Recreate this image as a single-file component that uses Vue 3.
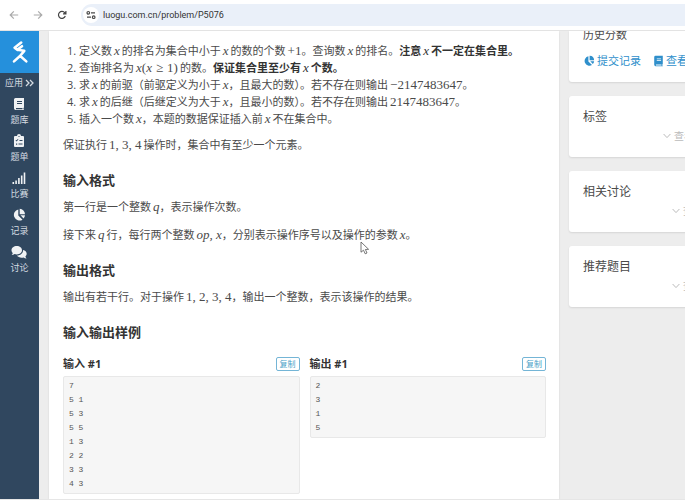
<script setup>
const nav = [
  { id: 'book', label: '题库' },
  { id: 'list', label: '题单' },
  { id: 'bars', label: '比赛' },
  { id: 'pie', label: '记录' },
  { id: 'chat', label: '讨论' },
]
const samples = [
  { title: '输入 #1', text: '7\n5 1\n5 3\n5 5\n1 3\n2 2\n3 3\n4 3' },
  { title: '输出 #1', text: '2\n3\n1\n5' },
]
const panels = [
  { title: '标签', wide: true },
  { title: '相关讨论', wide: false },
  { title: '推荐题目', wide: false },
]
</script>

<template>
  <div class="window">
    <header class="toolbar">
      <button class="tool muted" aria-label="后退">
        <svg width="10" height="10" viewBox="0 0 10 10"><path d="M9.2 5H1.2M4.8 1.4L1.2 5l3.6 3.6" /></svg>
      </button>
      <button class="tool muted" aria-label="前进">
        <svg width="10" height="10" viewBox="0 0 10 10"><path d="M.8 5h8M5.2 1.4L8.8 5 5.2 8.6" /></svg>
      </button>
      <button class="tool" aria-label="刷新">
        <svg width="10" height="10" viewBox="0 0 10 10"><path d="M8.3 6A3.5 3.5 0 1 1 7.8 2.8L8.8 3.7M8.9 1v2.9H6" /></svg>
      </button>
      <div class="address">
        <span class="site">
          <svg width="10" height="10" viewBox="0 0 10 10"><circle cx="2.3" cy="2.8" r="1.3" /><path d="M5 2.8h4M1 7.2h4" /><circle cx="7.7" cy="7.2" r="1.3" /></svg>
        </span>
        <input class="url" aria-label="地址" value="luogu.com.cn/problem/P5076" />
      </div>
    </header>

    <div class="page">
      <nav class="side">
        <a class="logo" href="#" aria-label="首页">
          <svg width="20" height="24" viewBox="0 0 20 24"><path d="M11.2 2.6L4.6 7.8l2.6 2L12 6.2M7.2 9.800L14.300 10.800 10 16 4 21.400M10 15.800l6.300 5.600" /></svg>
        </a>
        <a class="apps" href="#">应用
          <svg width="9" height="8" viewBox="0 0 9 8"><path d="M1 1l3 3-3 3M5 1l3 3-3 3" /></svg>
        </a>
        <a v-for="n in nav" :key="n.id" class="item" href="#">
          <svg v-if="n.id === 'book'" width="14" height="14" viewBox="0 0 14 14"><path fill-rule="evenodd" d="M3.5 1H12v9.5l-.5.5v1.5h.5V13H3.5A1.8 1.8 0 0 1 2 11.500v-9A1.5 1.5 0 0 1 3.5 1zM5 4v1h5V4zM5 6v1h5V6zM4 11v1.2h6.5V11z" /></svg>
          <svg v-else-if="n.id === 'list'" width="14" height="14" viewBox="0 0 14 14"><path fill-rule="evenodd" d="M5 2a2 2 0 0 1 4 0h2q1 0 1 1v9q0 1-1 1H3q-1 0-1-1V3q0-1 1-1zM6.5 2v1h1V2zM3.5 6.5l1 1 2-2-.6-.6-1.4 1.4-.4-.4zM7.5 6v1h3V6zM4 9.5v1.2h1.2V9.5zM6.5 9.600v1h4v-1z" /></svg>
          <svg v-else-if="n.id === 'bars'" width="14" height="14" viewBox="0 0 14 14"><path d="M.5 11h1.6v2H.5zM3.3 9.5h1.6V13H3.3zM6.1 7h1.6v6H6.1zM8.9 4.5h1.6V13H8.9zM11.7 1.5h1.6V13h-1.600z" /></svg>
          <svg v-else-if="n.id === 'pie'" width="14" height="14" viewBox="0 0 14 14"><path d="M6.3 1.5v6l4.2 4.2A5.6 5.6 0 1 1 6.3 1.5zM7.7.8a5.5 5.5 0 0 1 5.3 5.4H7.7zM8.5 7.3H13a5.5 5.5 0 0 1-1.5 3.3z" /></svg>
          <svg v-else width="16" height="14" viewBox="0 0 16 14"><path d="M5.8 1C8.8 1 11 2.9 11 5.2S8.8 9.4 5.8 9.4c-.8 0-1.5-.1-2.2-.4-.8.6-1.8 1-3 1 .7-.7 1.1-1.3 1.2-2C1 7.3.5 6.3.5 5.2.5 2.9 2.8 1 5.8 1zM12 5c2.2.4 3.7 1.9 3.7 3.7 0 1.1-.5 2-1.3 2.7.1.7.5 1.3 1.2 2-1.2 0-2.2-.4-3-1-.7.2-1.3.3-2 .3-2 0-3.7-.8-4.600-2.2C9.5 10.5 12.3 8 12 5z" /></svg>
          <span>{{ n.label }}</span>
        </a>
      </nav>

      <main class="main">
        <article class="card article">
          <ol class="ops">
            <li>定义数<i>x</i>的排名为集合中小于<i>x</i>的数的个数<b class="num end">+1</b>。查询数<i>x</i>的排名。<strong>注意<i>x</i>不一定在集合里。</strong></li>
            <li>查询排名为<i class="end">x</i><b class="num tight">(</b><i class="tight">x</i><b class="num rel">≥</b><b class="num start">1)</b>的数。<strong>保证集合里至少有<i>x</i>个数。</strong></li>
            <li>求<i>x</i>的前驱（前驱定义为小于<i class="end">x</i>，且最大的数）。若不存在则输出<b class="num end">−2147483647</b>。</li>
            <li>求<i>x</i>的后继（后继定义为大于<i class="end">x</i>，且最小的数）。若不存在则输出<b class="num end">2147483647</b>。</li>
            <li>插入一个数<i class="end">x</i>，本题的数据保证插入前<i>x</i>不在集合中。</li>
          </ol>
          <p>保证执行<b class="num">1, 3, 4</b>操作时，集合中有至少一个元素。</p>

          <h2>输入格式</h2>
          <p>第一行是一个整数<i class="end">q</i>，表示操作次数。</p>
          <p>接下来<i>q</i>行，每行两个整数<i class="end">op, x</i>，分别表示操作序号以及操作的参数<i class="end">x</i>。</p>

          <h2>输出格式</h2>
          <p>输出有若干行。对于操作<b class="num end">1, 2, 3, 4</b>，输出一个整数，表示该操作的结果。</p>

          <h2>输入输出样例</h2>
          <div class="samples">
            <section v-for="s in samples" :key="s.title" class="sample">
              <div class="head">
                <h3>{{ s.title }}</h3>
                <button class="copy">复制</button>
              </div>
              <pre>{{ s.text }}</pre>
            </section>
          </div>
        </article>

        <aside class="aside">
          <section class="card panel first">
            <span class="score">历史分数</span>
            <div class="links">
              <a href="#"><svg width="12" height="12" viewBox="0 0 14 14"><path d="M6.3 1.5v6l4.2 4.2A5.6 5.6 0 1 1 6.3 1.5zM7.7.8a5.5 5.5 0 0 1 5.3 5.4H7.7zM8.5 7.3H13a5.5 5.5 0 0 1-1.5 3.3z" /></svg>提交记录</a>
              <a href="#"><svg width="11" height="12" viewBox="1 0 12 14"><path fill-rule="evenodd" d="M3.5 1H12v9.5l-.5.5v1.5h.5V13H3.5A1.8 1.8 0 0 1 2 11.500v-9A1.5 1.5 0 0 1 3.5 1zM5 4v1h5V4zM5 6v1h5V6zM4 11v1.2h6.5V11z" /></svg>查看</a>
            </div>
          </section>
          <section v-for="p in panels" :key="p.title" class="card panel">
            <h4>{{ p.title }}</h4>
            <button class="more" :class="{ wide: p.wide }">
              <svg width="8" height="6" viewBox="0 0 8 6"><path d="M.6 1L4 4.6 7.4 1" /></svg>查看
            </button>
          </section>
        </aside>
      </main>
    </div>

    <svg class="pointer" width="10" height="14" viewBox="0 0 10 14"><path d="M1 1v10.200l2.500-2 1.700 3.600 1.800-.8-1.600-3.500 3.200-.2z" /></svg>
  </div>
</template>

<style>
body { margin: 0; overflow: hidden; }
</style>

<style scoped>
* { box-sizing: border-box; }
.window {
  position: relative;
  height: 100vh;
  display: flex;
  flex-direction: column;
  overflow: hidden;
  border-bottom: 1px solid #e6e6e6;
  background: #fff;
  color: #4a4a4a;
  font: 11px/17px "Open Sans", "Noto Sans CJK SC", sans-serif;
}
button { border: 0; background: none; padding: 0; font: inherit; color: inherit; }
a { color: inherit; text-decoration: none; }
h2, h3, h4, p, ol, pre { margin: 0; }

.toolbar {
  flex: none;
  height: 31px;
  display: flex;
  align-items: center;
  gap: 14px;
  padding-left: 9px;
  border-bottom: 1px solid #e3e3e3;
}
.tool { display: flex; color: #444; }
.tool.muted { color: #aaa; }
.tool svg, .site svg { fill: none; stroke: currentColor; stroke-width: 1.2; }
.address {
  flex: 1;
  height: 22px;
  display: flex;
  align-items: center;
  gap: 4px;
  padding-left: 2px;
  border-radius: 11px 0 0 11px;
  background: #eaf0f9;
}
.site {
  width: 16px;
  height: 16px;
  display: grid;
  place-items: center;
  border-radius: 50%;
  background: #fff;
}
.url {
  flex: 1;
  min-width: 0;
  border: 0;
  padding: 0;
  background: none;
  font: 9px/16px Roboto, sans-serif;
  color: #333;
}

.page { flex: 1; min-height: 0; display: flex; }
.side {
  flex: none;
  width: 39px;
  display: flex;
  flex-direction: column;
  align-items: center;
  background: #30475f;
  color: #d5dbe1;
  font-size: 9px;
  line-height: 14px;
}
.logo {
  width: 100%;
  height: 42px;
  display: grid;
  place-items: center;
  background: #2590dc;
}
.logo svg { fill: none; stroke: #fff; stroke-width: 2.6; stroke-linejoin: round; stroke-linecap: round; }
.apps { display: flex; align-items: center; gap: 2px; margin: 3px 0 7px; }
.apps svg { fill: none; stroke: currentColor; stroke-width: 1.3; }
.item { display: flex; flex-direction: column; align-items: center; gap: 2px; margin-bottom: 7px; }
.item svg { fill: #f0f2f4; }

.main {
  flex: 1;
  min-width: 0;
  display: flex;
  gap: 10px;
  padding-left: 10px;
  overflow: hidden;
  background: #ededed;
}
.card { background: #fff; box-shadow: 0 1px 2px #0000001a; }
.article { flex: 1; min-width: 0; padding: 11px 13px 0 14px; }
.ops { padding-left: 16px; white-space: nowrap; }
i, .num {
  margin: 0 2px;
  font-family: "Liberation Serif", serif;
  font-size: 13px;
  line-height: 1;
  font-weight: 400;
}
.end { margin-right: 0; }
.start { margin-left: 0; }
.tight { margin: 0; }
.rel { margin: 0 4px; }
strong { color: #333; }
p { margin-top: 11px; }
.ops + p { margin-top: 9px; }
h2 { margin-top: 17px; font-size: 13px; line-height: 20px; font-weight: 700; color: #333; }
h2 + p { margin-top: 8px; }
.samples { display: grid; grid-template-columns: 1fr 1fr; align-items: start; gap: 10px; margin-top: 14px; }
.head { display: flex; justify-content: space-between; align-items: center; height: 16px; margin-bottom: 4px; }
h3 { font-size: 11px; line-height: 16px; color: #333; }
.copy {
  padding: 0 3px;
  border: 1px solid #74b5d6;
  border-radius: 2px;
  font-size: 8px;
  line-height: 12px;
  color: #4a9fc8;
}
pre {
  padding: 2px 5px;
  border: 1px solid #e8e8e8;
  border-radius: 2px;
  background: #f6f6f6;
  color: #555;
  font: 8px/14px "Liberation Mono", monospace;
}

.aside { flex: none; width: 116px; display: flex; flex-direction: column; gap: 14px; }
.panel { width: 140px; height: 61px; padding: 12px 14px 0; border-radius: 3px; }
.panel.first { height: 51px; padding-top: 0; border-radius: 0 0 3px 3px; }
.score { display: block; margin-top: -5px; }
.links { display: flex; gap: 12px; margin-top: 9px; color: #2f8fcb; white-space: nowrap; }
.links a { display: flex; align-items: center; gap: 2px; }
.links svg { flex: none; fill: currentColor; }
h4 { font-size: 12px; line-height: 18px; font-weight: 400; }
.more { display: flex; align-items: center; gap: 3px; margin: 2px 0 0 89px; font-size: 10px; line-height: 16px; color: #bbb; white-space: nowrap; }
.more.wide { margin-left: 80px; }
.more svg { flex: none; fill: none; stroke: currentColor; }

.pointer { position: absolute; left: 360px; top: 241px; fill: #fff; stroke: #555; stroke-width: .8; }
</style>
